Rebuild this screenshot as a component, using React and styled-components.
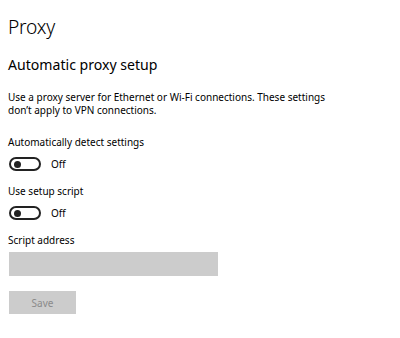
import React from "react";
import styled, { createGlobalStyle } from "styled-components";

const Global = createGlobalStyle`
  html, body { margin: 0; padding: 0; background: #ffffff; }
  body { font-family: "Noto Sans", "Open Sans", sans-serif; color: #000; }
`;

const Page = styled.div`
  width: 400px;
  height: 338px;
  box-sizing: border-box;
  padding: 13px 0 0 8px;
  display: flex;
  flex-direction: column;
  overflow: hidden;
`;

const Title = styled.h1`
  margin: 0;
  font-size: 19.2px;
  font-weight: 300;
  line-height: 28px;
  letter-spacing: -0.2px;
`;

const Heading = styled.h2`
  margin: 14px 0 0 0;
  font-size: 14.1px;
  font-weight: 400;
  line-height: 20px;
`;

const Paragraph = styled.p`
  margin: 16px 0 0 0;
  font-size: 10px;
  line-height: 13px;
  width: 340px;
`;

const Label = styled.div`
  margin-top: ${(p) => p.$top}px;
  font-size: 10px;
  line-height: 14px;
`;

const ToggleRow = styled.div`
  margin-top: 8px;
  display: flex;
  align-items: center;
  gap: 10px;
  height: 14px;
  padding-left: 1px;
`;

const Track = styled.span`
  box-sizing: border-box;
  width: 32px;
  height: 14px;
  border: 2px solid #222;
  border-radius: 7px;
  display: flex;
  align-items: center;
  padding-left: 3px;
`;

const Thumb = styled.span`
  width: 7px;
  height: 7px;
  border-radius: 50%;
  background: #222;
`;

const State = styled.span`
  font-size: 10px;
  line-height: 14px;
`;

const Input = styled.div`
  margin-top: 5px;
  width: 209px;
  height: 24px;
  background: #cccccc;
  margin-left: 1px;
`;

const Button = styled.button`
  margin-top: 15px;
  margin-left: 1px;
  width: 67px;
  height: 23px;
  border: none;
  background: #cccccc;
  color: #8a8a8a;
  font-family: inherit;
  font-size: 10px;
  padding: 0;
`;

function Toggle() {
  return (
    <ToggleRow>
      <Track>
        <Thumb />
      </Track>
      <State>Off</State>
    </ToggleRow>
  );
}

export default function App() {
  return (
    <>
      <Global />
      <Page>
        <Title>Proxy</Title>
        <Heading>Automatic proxy setup</Heading>
        <Paragraph>
          Use a proxy server for Ethernet or Wi-Fi connections. These settings
          don’t apply to VPN connections.
        </Paragraph>
        <Label $top={18}>Automatically detect settings</Label>
        <Toggle />
        <Label $top={13}>Use setup script</Label>
        <Toggle />
        <Label $top={13}>Script address</Label>
        <Input />
        <Button disabled>Save</Button>
      </Page>
    </>
  );
}
